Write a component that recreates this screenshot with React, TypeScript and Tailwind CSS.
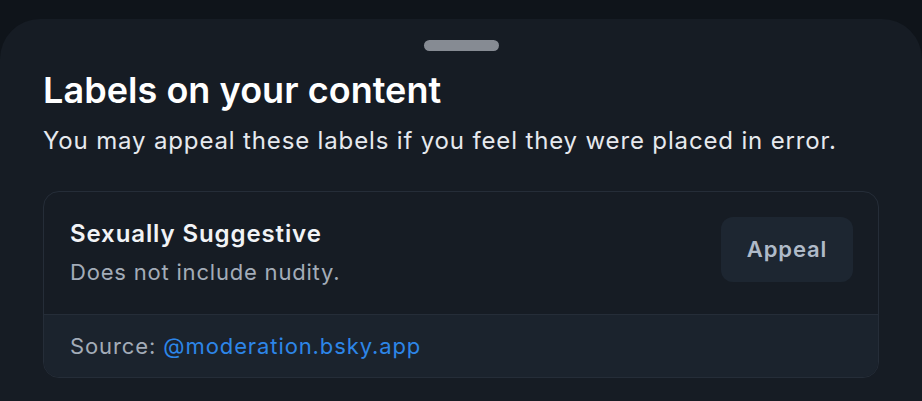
export default function App() {
  return (
    <div
      className="h-[401px] w-[922px] overflow-hidden bg-[#0f141a] pt-[19px]"
      style={{ fontFamily: 'Inter, "Noto Sans", sans-serif' }}
    >
      <div className="h-[420px] rounded-t-[40px] bg-[#161c24] px-[43px] pt-[21px]">
        <div className="mx-auto h-[11px] w-[75px] rounded-full bg-[#868b93]" />
        <h1 className="mt-[15px] text-[36px] font-semibold leading-[48px] tracking-[0.05px] text-white">
          Labels on your content
        </h1>
        <p className="mt-[11px] text-[24px] leading-[32px] tracking-[0.85px] text-[#e6e9ee]">
          You may appeal these labels if you feel they were placed in error.
        </p>
        <div className="mt-[34px] overflow-hidden rounded-[16px] border border-[#252d38]">
          <div className="flex items-center justify-between pb-[27px] pl-[26px] pr-[25px] pt-[26px]">
            <div>
              <div className="text-[24px] font-semibold leading-[32px] tracking-[0.9px] text-[#f1f3f6]">
                Sexually Suggestive
              </div>
              <div className="mt-[7px] text-[22px] leading-[30px] tracking-[0.8px] text-[#a3acb8]">
                Does not include nudity.
              </div>
            </div>
            <button
              type="button"
              className="-mt-[6px] h-[65px] w-[132px] rounded-[12px] bg-[#1d2631] text-[22px] font-semibold tracking-[0.9px] text-[#afbac8]"
            >
              Appeal
            </button>
          </div>
          <div className="flex h-[63px] items-center border-t border-[#252d38] bg-[#1b232d] pl-[26px] text-[22px] tracking-[0.9px] text-[#a3acb8]">
            Source:&nbsp;<span className="text-[#2d86e8]">@moderation.bsky.app</span>
          </div>
        </div>
      </div>
    </div>
  );
}
